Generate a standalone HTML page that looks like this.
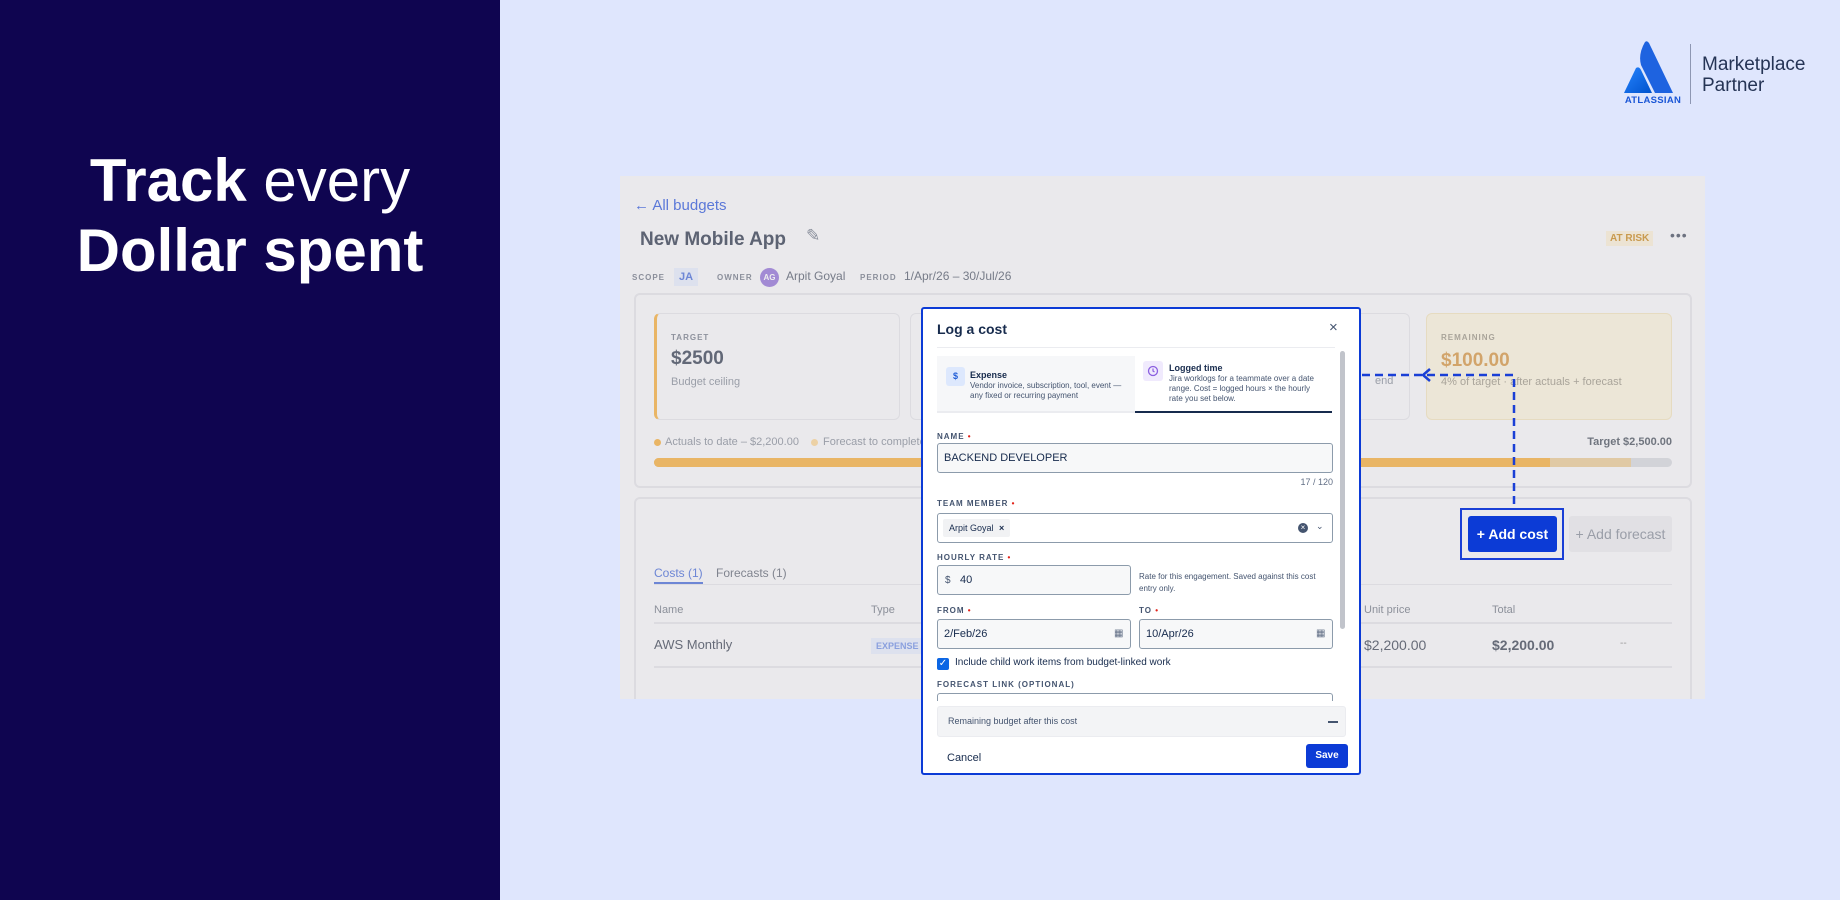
<!DOCTYPE html>
<html><head><meta charset="utf-8"><style>
*{margin:0;padding:0;box-sizing:border-box}
body{width:1840px;height:900px;position:relative;overflow:hidden;background:#dfe6fd;font-family:"Liberation Sans",Arial,sans-serif}
.a{position:absolute;white-space:nowrap}
.lbl{font-size:8px;font-weight:700;letter-spacing:1px;color:#44546f}
.req{color:#e2231a}
.inp{position:absolute;background:#f7f8f9;border:1px solid #8c9bab;border-radius:3px}
</style></head><body>
<div class="a" style="left:0;top:0;width:500px;height:900px;background:#0f0550"></div>
<div class="a" style="left:0;width:500px;top:146px;text-align:center;color:#fff;font-size:60px;line-height:70px">
<b>Track</b> every<br><b>Dollar spent</b></div>

<svg class="a" style="left:1622px;top:40px" width="62" height="64" viewBox="0 0 62 64">
<defs><linearGradient id="g" x1="0" y1="0" x2="1" y2="1"><stop offset="0" stop-color="#2684ff"/><stop offset="1" stop-color="#0052cc"/></linearGradient></defs>
<path d="M14 28 Q17 26 19 30 L30 53 L2 53 Z" fill="url(#g)"/>
<path d="M23 2 Q25 0 27 3 L51 53 L33 53 L19 25 Q16 14 23 2Z" fill="#1e63e0"/>
<text x="31" y="63" text-anchor="middle" font-family="Liberation Sans" font-weight="700" font-size="9.5" fill="#1a56d6" letter-spacing=".3">ATLASSIAN</text>
</svg>
<div class="a" style="left:1690px;top:44px;width:1px;height:60px;background:#8e97b3"></div>
<div class="a" style="left:1702px;top:54px;font-size:19px;line-height:21px;color:#253455">Marketplace<br>Partner</div>

<div class="a" style="left:620px;top:176px;width:1085px;height:523px;background:#eae9ec;overflow:hidden">
<div class="a" style="left:14px;top:21px;font-size:15px;color:#5b78d8">← All budgets</div>
<div class="a" style="left:20px;top:53px;font-size:19px;font-weight:700;color:#5d6373">New Mobile App</div>
<div class="a" style="left:186px;top:50px;font-size:17px;color:#8a8f9c">✎</div>
<div class="a" style="left:986px;top:55px;font-size:10px;font-weight:700;color:#c99a4e;background:#ece3d3;padding:2px 4px">AT RISK</div>
<div class="a" style="left:1050px;top:51px;font-size:14px;color:#6d7280;letter-spacing:1px">•••</div>
<div class="a lbl" style="left:12px;top:97px;color:#8b8f9b">SCOPE</div>
<div class="a" style="left:54px;top:92px;font-size:11px;font-weight:700;color:#6d86d5;background:#dde1ee;padding:3px 5px">JA</div>
<div class="a lbl" style="left:97px;top:97px;color:#8b8f9b">OWNER</div>
<div class="a" style="left:140px;top:92px;width:19px;height:19px;border-radius:50%;background:#a28ad4;color:#eee;font-size:8px;font-weight:700;text-align:center;line-height:19px">AG</div>
<div class="a" style="left:166px;top:93px;font-size:12px;color:#767b88">Arpit Goyal</div>
<div class="a lbl" style="left:240px;top:97px;color:#8b8f9b">PERIOD</div>
<div class="a" style="left:284px;top:93px;font-size:12px;color:#767b88">1/Apr/26 – 30/Jul/26</div>

<div class="a" style="left:14px;top:117px;width:1058px;height:195px;border:2px solid #dcdbe0;border-radius:6px"></div>
<div class="a" style="left:34px;top:137px;width:246px;height:107px;border:1px solid #dcdbe0;border-left:3px solid #e9b565;border-radius:6px">
<div class="a lbl" style="left:14px;top:19px;color:#8e929d">TARGET</div>
<div class="a" style="left:14px;top:34px;font-size:19px;font-weight:700;color:#626877">$2500</div>
<div class="a" style="left:14px;top:62px;font-size:11px;color:#9a9ea8">Budget ceiling</div></div>
<div class="a" style="left:290px;top:137px;width:500px;height:107px;border:1px solid #dcdbe0;border-radius:6px"></div>
<div class="a" style="left:755px;top:199px;font-size:11px;color:#9a9ea8">end</div>
<div class="a" style="left:806px;top:137px;width:246px;height:107px;border:1px solid #e6dbc0;background:#ece6d7;border-radius:6px">
<div class="a lbl" style="left:14px;top:19px;color:#a9a49a">REMAINING</div>
<div class="a" style="left:14px;top:36px;font-size:19px;font-weight:700;color:#d2a46a">$100.00</div>
<div class="a" style="left:14px;top:62px;font-size:11px;color:#a9a49a">4% of target · after actuals + forecast</div></div>
<div class="a" style="left:34px;top:263px;width:7px;height:7px;border-radius:50%;background:#e9b565"></div>
<div class="a" style="left:45px;top:260px;font-size:11px;color:#9a9ea8">Actuals to date – $2,200.00</div>
<div class="a" style="left:191px;top:263px;width:7px;height:7px;border-radius:50%;background:#ecd1a5"></div>
<div class="a" style="left:203px;top:260px;font-size:11px;color:#9a9ea8">Forecast to complete</div>
<div class="a" style="left:900px;top:260px;font-size:11px;font-weight:700;color:#70757f;width:152px;text-align:right">Target $2,500.00</div>
<div class="a" style="left:34px;top:282px;width:1018px;height:9px;border-radius:5px;background:#d2d3d8;overflow:hidden">
<div class="a" style="left:0;top:0;width:977px;height:9px;background:#e0c9a4"></div>
<div class="a" style="left:0;top:0;width:896px;height:9px;background:#e9b565"></div></div>

<div class="a" style="left:14px;top:321px;width:1058px;height:230px;border:2px solid #dcdbe0;border-radius:6px"></div>
<div class="a" style="left:840px;top:332px;width:104px;height:52px;border:2px solid #1a3fd6"></div>
<div class="a" style="left:848px;top:340px;width:89px;height:36px;background:#0c3bd6;border-radius:3px;color:#fff;font-size:14px;font-weight:700;text-align:center;line-height:36px">+ Add cost</div>
<div class="a" style="left:949px;top:340px;width:103px;height:36px;background:#e1e0e4;border-radius:3px;color:#9a9ea8;font-size:14px;text-align:center;line-height:36px">+ Add forecast</div>
<div class="a" style="left:34px;top:390px;font-size:12px;color:#6d86d5">Costs (1)</div>
<div class="a" style="left:34px;top:406px;width:49px;height:2px;background:#6d86d5"></div>
<div class="a" style="left:96px;top:390px;font-size:12px;color:#80848f">Forecasts (1)</div>
<div class="a" style="left:34px;top:408px;width:1018px;height:1px;background:#dcdbe0"></div>
<div class="a" style="left:34px;top:428px;font-size:11px;color:#8c909a">Name</div>
<div class="a" style="left:251px;top:428px;font-size:11px;color:#8c909a">Type</div>
<div class="a" style="left:744px;top:428px;font-size:11px;color:#8c909a">Unit price</div>
<div class="a" style="left:872px;top:428px;font-size:11px;color:#8c909a">Total</div>
<div class="a" style="left:34px;top:446px;width:1018px;height:2px;background:#dcdbe0"></div>
<div class="a" style="left:34px;top:461px;font-size:13px;color:#666b78">AWS Monthly</div>
<div class="a" style="left:251px;top:462px;font-size:9px;font-weight:700;color:#8aa0de;background:#dde1ee;padding:3px 5px">EXPENSE</div>
<div class="a" style="left:744px;top:461px;font-size:14px;color:#666b78">$2,200.00</div>
<div class="a" style="left:872px;top:461px;font-size:14px;font-weight:700;color:#666b78">$2,200.00</div>
<div class="a" style="left:1000px;top:462px;font-size:10px;color:#999">--</div>
<div class="a" style="left:34px;top:490px;width:1018px;height:2px;background:#dcdbe0"></div>
</div>

<svg class="a" style="left:1360px;top:368px" width="160" height="142">
<path d="M2 7 H154 V140" fill="none" stroke="#1a3fd6" stroke-width="2.5" stroke-dasharray="8 5"/>
<path d="M70 1 L63 7 L70 13" fill="none" stroke="#1a3fd6" stroke-width="2.5"/>
</svg>

<div class="a" style="left:921px;top:307px;width:440px;height:468px;background:#fff;border:2px solid #0c3bd6;border-radius:3px;overflow:hidden">
<div class="a" style="left:14px;top:12px;font-size:14px;font-weight:700;color:#172b4d">Log a cost</div>
<div class="a" style="left:406px;top:10px;font-size:15px;color:#44546f">×</div>
<div class="a" style="left:14px;top:38px;width:398px;height:1px;background:#ebecf0"></div>
<div class="a" style="left:417px;top:42px;width:5px;height:278px;background:#c1c4cb;border-radius:3px"></div>
<div class="a" style="left:14px;top:47px;width:198px;height:57px;background:#f6f7f9;border-bottom:2px solid #ebecf0"></div>
<div class="a" style="left:23px;top:58px;width:19px;height:19px;background:#dde8fd;border-radius:3px;color:#1f5cd6;font-size:9px;font-weight:700;text-align:center;line-height:19px">$</div>
<div class="a" style="left:47px;top:61px;font-size:9px;font-weight:700;color:#172b4d">Expense</div>
<div class="a" style="left:47px;top:72px;font-size:8px;line-height:10px;color:#44546f">Vendor invoice, subscription, tool, event —<br>any fixed or recurring payment</div>
<div class="a" style="left:212px;top:47px;width:197px;height:57px;border-bottom:2px solid #172b4d"></div>
<div class="a" style="left:220px;top:52px;width:20px;height:20px;background:#f0eafd;border-radius:3px"></div>
<svg class="a" style="left:224px;top:56px" width="12" height="12"><circle cx="6" cy="6" r="4.5" fill="none" stroke="#8b5fe0" stroke-width="1.3"/><path d="M6 3.5V6L7.5 7" fill="none" stroke="#8b5fe0" stroke-width="1.2"/></svg>
<div class="a" style="left:246px;top:54px;font-size:9px;font-weight:700;color:#172b4d">Logged time</div>
<div class="a" style="left:246px;top:65px;font-size:8px;line-height:10px;color:#44546f">Jira worklogs for a teammate over a date<br>range. Cost = logged hours × the hourly<br>rate you set below.</div>

<div class="a lbl" style="left:14px;top:123px">NAME <span class="req">•</span></div>
<div class="inp" style="left:14px;top:134px;width:396px;height:30px"><div class="a" style="left:6px;top:8px;font-size:11px;color:#172b4d">BACKEND DEVELOPER</div></div>
<div class="a" style="left:330px;top:168px;width:80px;text-align:right;font-size:9px;color:#626f86">17 / 120</div>
<div class="a lbl" style="left:14px;top:190px">TEAM MEMBER <span class="req">•</span></div>
<div class="inp" style="left:14px;top:204px;width:396px;height:30px;background:#fff">
<div class="a" style="left:5px;top:5px;height:18px;padding:0 6px;background:#f1f2f4;border-radius:2px;font-size:9px;line-height:18px;color:#172b4d">Arpit Goyal <b style="margin-left:3px">×</b></div>
<div class="a" style="left:360px;top:9px;width:10px;height:10px;border-radius:50%;background:#44546f;color:#fff;font-size:8px;line-height:10px;text-align:center">×</div>
<div class="a" style="left:378px;top:7px;font-size:9px;color:#44546f">⌄</div></div>
<div class="a lbl" style="left:14px;top:244px">HOURLY RATE <span class="req">•</span></div>
<div class="inp" style="left:14px;top:256px;width:194px;height:30px"><div class="a" style="left:7px;top:9px;font-size:10px;color:#44546f">$</div><div class="a" style="left:22px;top:8px;font-size:11px;color:#172b4d">40</div></div>
<div class="a" style="left:216px;top:262px;font-size:8px;line-height:12px;color:#44546f">Rate for this engagement. Saved against this cost<br>entry only.</div>
<div class="a lbl" style="left:14px;top:297px">FROM <span class="req">•</span></div>
<div class="a lbl" style="left:216px;top:297px">TO <span class="req">•</span></div>
<div class="inp" style="left:14px;top:310px;width:194px;height:30px"><div class="a" style="left:6px;top:8px;font-size:11px;color:#172b4d">2/Feb/26</div><div class="a" style="left:176px;top:8px;font-size:10px;color:#626f86">▦</div></div>
<div class="inp" style="left:216px;top:310px;width:194px;height:30px"><div class="a" style="left:6px;top:8px;font-size:11px;color:#172b4d">10/Apr/26</div><div class="a" style="left:176px;top:8px;font-size:10px;color:#626f86">▦</div></div>
<div class="a" style="left:14px;top:349px;width:12px;height:12px;background:#0c66e4;border-radius:2px;color:#fff;font-size:10px;line-height:12px;text-align:center">✓</div>
<div class="a" style="left:32px;top:348px;font-size:10px;color:#172b4d">Include child work items from budget-linked work</div>
<div class="a lbl" style="left:14px;top:371px">FORECAST LINK (OPTIONAL)</div>
<div class="a" style="left:14px;top:384px;width:396px;height:8px;border:1px solid #8c9bab;border-bottom:none;border-radius:3px 3px 0 0"></div>
<div class="a" style="left:0;top:392px;width:440px;height:6px;background:#fff"></div>
<div class="a" style="left:14px;top:397px;width:409px;height:31px;background:#f3f4f6;border:1px solid #ebecf0;border-radius:3px">
<div class="a" style="left:10px;top:9px;font-size:9px;color:#44546f">Remaining budget after this cost</div>
<div class="a" style="left:390px;top:14px;width:10px;height:2px;background:#44546f"></div></div>
<div class="a" style="left:24px;top:443px;font-size:11px;color:#172b4d">Cancel</div>
<div class="a" style="left:383px;top:435px;width:42px;height:24px;background:#0c3bd6;border-radius:3px;color:#fff;font-size:10px;font-weight:700;text-align:center;line-height:24px">Save</div>
</div>
</body></html>
